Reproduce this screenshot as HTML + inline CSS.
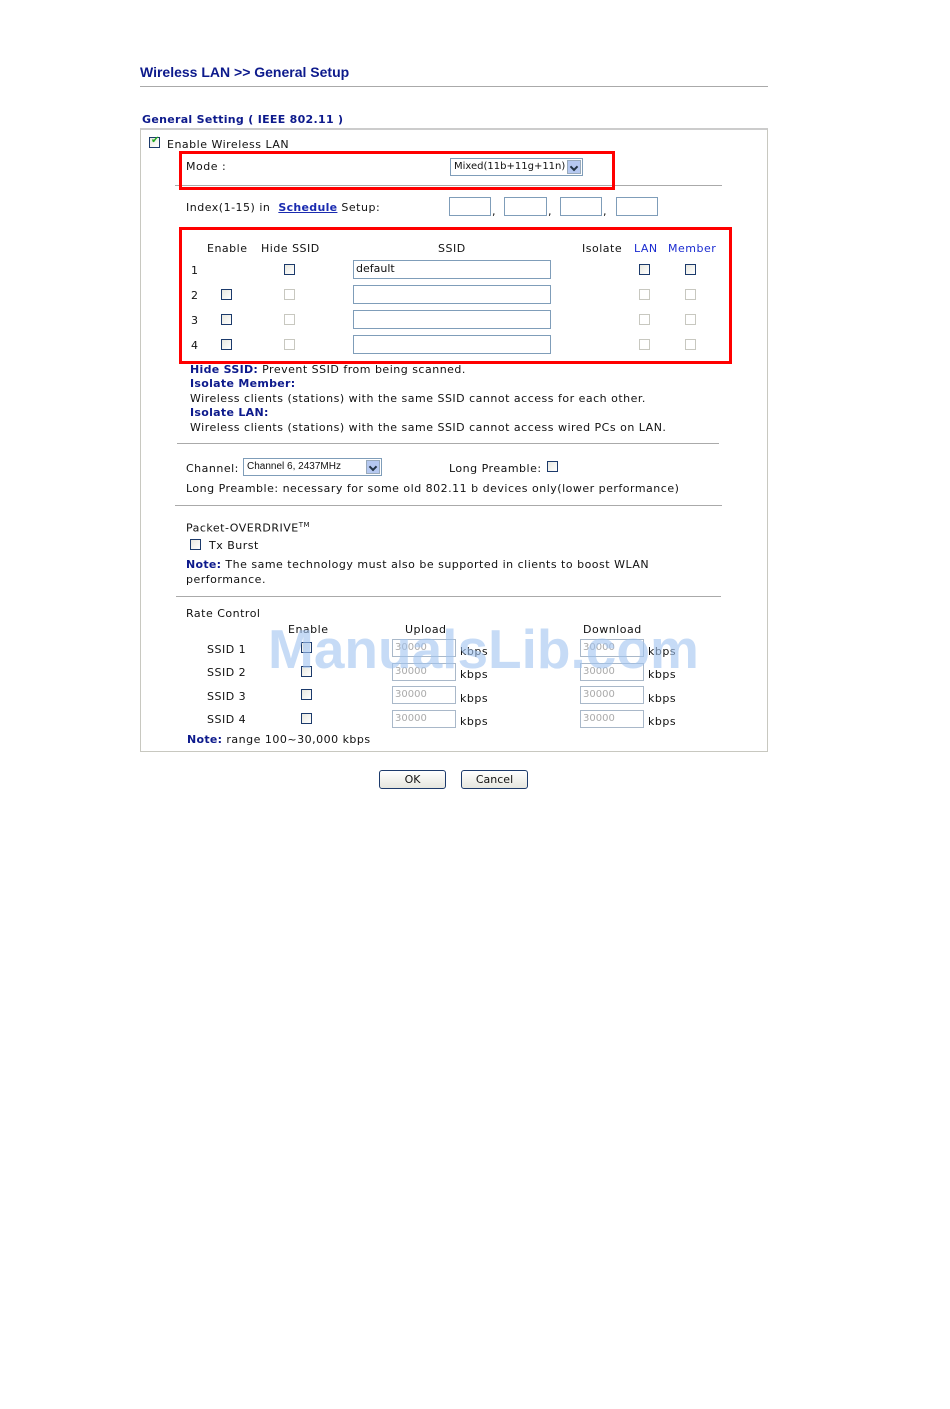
<!DOCTYPE html>
<html><head><meta charset="utf-8"><style>
*{margin:0;padding:0;box-sizing:border-box}
body{width:950px;height:1409px;background:#fff;position:relative;font-family:"DejaVu Sans","Liberation Sans",sans-serif;font-size:11px;letter-spacing:0.5px;color:#111;overflow:hidden}
.a{position:absolute;white-space:nowrap;line-height:12px;margin-top:1px}
.b{color:#0d1a8c;font-weight:bold;letter-spacing:0.3px}
.l{color:#1a2bd0}
.cb{position:absolute;width:11px;height:11px;border:1px solid #1c3a6b;background:linear-gradient(135deg,#e8e8e0,#fff)}
.cd{position:absolute;width:11px;height:11px;border:1px solid #c8c8c0;background:#fff}
.in{position:absolute;border:1px solid #7f9db9;background:#fff;height:19px}
.rin{position:absolute;border:1px solid #a9b8c9;background:#fff;height:18px;width:64px;color:#aaa;font-size:10px;letter-spacing:0;padding:2px 2px;line-height:12px}
.hr{position:absolute;height:1px;background:#aaa}
.red{position:absolute;border:3px solid #f00}
.sel{position:absolute;border:1px solid #7f9db9;background:#fff;height:18px;font-size:10px;letter-spacing:0;padding:2px 3px;line-height:12px}
.sel i{position:absolute;right:1px;top:1px;width:14px;height:14px;background:#b5c8f0;border:1px solid #9ab}
.sel i:after{content:"";position:absolute;left:3px;top:3px;width:4px;height:4px;border-right:2px solid #234;border-bottom:2px solid #234;transform:rotate(45deg)}
.btn{position:absolute;height:19px;border:1px solid #1c3a6b;border-radius:3px;background:linear-gradient(#fff,#e6e6de);text-align:center;line-height:17px;font-size:11px;letter-spacing:0}
</style></head><body>
<div class="a b" style="left:140px;top:63px;font-size:14px;line-height:16px;letter-spacing:0;font-family:'Liberation Sans',sans-serif">Wireless LAN &gt;&gt; General Setup</div>
<div class="hr" style="left:140px;top:86px;width:628px"></div>
<div class="a b" style="left:142px;top:113px;font-size:11px">General Setting ( IEEE 802.11 )</div>
<div style="position:absolute;left:140px;top:128px;width:628px;height:624px;border:1px solid #c8c8c0;border-top:2px solid #ccc"></div>

<div class="cb" style="left:149px;top:137px"><span style="position:absolute;left:1px;top:-3px;color:#2a2;font-size:10px">✔</span></div>
<div class="a" style="left:167px;top:138px">Enable Wireless LAN</div>
<div class="a" style="left:186px;top:160px">Mode :</div>
<div class="sel" style="left:450px;top:158px;width:133px">Mixed(11b+11g+11n)<i></i></div>
<div class="hr" style="left:175px;top:185px;width:547px"></div>
<div class="red" style="left:179px;top:151px;width:436px;height:39px"></div>

<div class="a" style="left:186px;top:201px">Index(1-15) in &nbsp;<u class="b" style="color:#1a2bb0">Schedule</u> Setup:</div>
<div class="in" style="left:449px;top:197px;width:42px"></div><div class="a" style="left:492px;top:205px">,</div>
<div class="in" style="left:504px;top:197px;width:43px"></div><div class="a" style="left:548px;top:205px">,</div>
<div class="in" style="left:560px;top:197px;width:42px"></div><div class="a" style="left:603px;top:205px">,</div>
<div class="in" style="left:616px;top:197px;width:42px"></div>

<div class="red" style="left:179px;top:227px;width:553px;height:137px"></div>
<div class="a" style="left:207px;top:242px">Enable</div>
<div class="a" style="left:261px;top:242px">Hide SSID</div>
<div class="a" style="left:438px;top:242px">SSID</div>
<div class="a" style="left:582px;top:242px">Isolate</div>
<div class="a l" style="left:634px;top:242px">LAN</div>
<div class="a l" style="left:668px;top:242px">Member</div>

<div class="a" style="left:191px;top:264px">1</div>
<div class="cb" style="left:284px;top:264px"></div>
<div class="in" style="left:353px;top:260px;width:198px;padding:2px 2px;line-height:12px;letter-spacing:0">default</div>
<div class="cb" style="left:639px;top:264px"></div><div class="cb" style="left:685px;top:264px"></div>

<div class="a" style="left:191px;top:289px">2</div>
<div class="cb" style="left:221px;top:289px"></div><div class="cd" style="left:284px;top:289px"></div>
<div class="in" style="left:353px;top:285px;width:198px"></div>
<div class="cd" style="left:639px;top:289px"></div><div class="cd" style="left:685px;top:289px"></div>

<div class="a" style="left:191px;top:314px">3</div>
<div class="cb" style="left:221px;top:314px"></div><div class="cd" style="left:284px;top:314px"></div>
<div class="in" style="left:353px;top:310px;width:198px"></div>
<div class="cd" style="left:639px;top:314px"></div><div class="cd" style="left:685px;top:314px"></div>

<div class="a" style="left:191px;top:339px">4</div>
<div class="cb" style="left:221px;top:339px"></div><div class="cd" style="left:284px;top:339px"></div>
<div class="in" style="left:353px;top:335px;width:198px"></div>
<div class="cd" style="left:639px;top:339px"></div><div class="cd" style="left:685px;top:339px"></div>

<div class="a" style="left:190px;top:363px"><span class="b">Hide SSID:</span> Prevent SSID from being scanned.</div>
<div class="a b" style="left:190px;top:377px">Isolate Member:</div>
<div class="a" style="left:190px;top:392px">Wireless clients (stations) with the same SSID cannot access for each other.</div>
<div class="a b" style="left:190px;top:406px">Isolate LAN:</div>
<div class="a" style="left:190px;top:421px">Wireless clients (stations) with the same SSID cannot access wired PCs on LAN.</div>
<div class="hr" style="left:177px;top:443px;width:542px"></div>

<div class="a" style="left:186px;top:462px">Channel:</div>
<div class="sel" style="left:243px;top:458px;width:139px;font-family:'Liberation Sans',sans-serif">Channel 6, 2437MHz<i></i></div>
<div class="a" style="left:449px;top:462px">Long Preamble:</div>
<div class="cb" style="left:547px;top:461px"></div>
<div class="a" style="left:186px;top:482px">Long Preamble: necessary for some old 802.11 b devices only(lower performance)</div>
<div class="hr" style="left:175px;top:505px;width:547px"></div>

<div class="a" style="left:186px;top:518px">Packet-OVERDRIVE<sup style="font-size:7px">TM</sup></div>
<div class="cb" style="left:190px;top:539px"></div>
<div class="a" style="left:209px;top:539px">Tx Burst</div>
<div class="a" style="left:186px;top:558px"><span class="b">Note:</span> The same technology must also be supported in clients to boost WLAN</div>
<div class="a" style="left:186px;top:573px">performance.</div>
<div class="hr" style="left:176px;top:596px;width:545px"></div>

<div class="a" style="left:186px;top:607px">Rate Control</div>
<div class="a" style="left:288px;top:623px">Enable</div>
<div class="a" style="left:405px;top:623px">Upload</div>
<div class="a" style="left:583px;top:623px">Download</div>

<div class="a" style="left:207px;top:643px">SSID 1</div><div class="cb" style="left:301px;top:642px"></div>
<div class="rin" style="left:392px;top:639px">30000</div><div class="a" style="left:460px;top:645px">kbps</div>
<div class="rin" style="left:580px;top:639px">30000</div><div class="a" style="left:648px;top:645px">kbps</div>

<div class="a" style="left:207px;top:666px">SSID 2</div><div class="cb" style="left:301px;top:666px"></div>
<div class="rin" style="left:392px;top:663px">30000</div><div class="a" style="left:460px;top:668px">kbps</div>
<div class="rin" style="left:580px;top:663px">30000</div><div class="a" style="left:648px;top:668px">kbps</div>

<div class="a" style="left:207px;top:690px">SSID 3</div><div class="cb" style="left:301px;top:689px"></div>
<div class="rin" style="left:392px;top:686px">30000</div><div class="a" style="left:460px;top:692px">kbps</div>
<div class="rin" style="left:580px;top:686px">30000</div><div class="a" style="left:648px;top:692px">kbps</div>

<div class="a" style="left:207px;top:713px">SSID 4</div><div class="cb" style="left:301px;top:713px"></div>
<div class="rin" style="left:392px;top:710px">30000</div><div class="a" style="left:460px;top:715px">kbps</div>
<div class="rin" style="left:580px;top:710px">30000</div><div class="a" style="left:648px;top:715px">kbps</div>

<div class="a" style="left:187px;top:733px"><span class="b">Note:</span> range 100~30,000 kbps</div>

<div class="a" style="left:268px;top:618px;font-family:'Liberation Sans',sans-serif;font-weight:bold;font-size:55px;letter-spacing:0;line-height:60px;color:rgba(160,195,240,0.6)">ManualsLib.com</div>

<div class="btn" style="left:379px;top:770px;width:67px">OK</div>
<div class="btn" style="left:461px;top:770px;width:67px">Cancel</div>
</body></html>
